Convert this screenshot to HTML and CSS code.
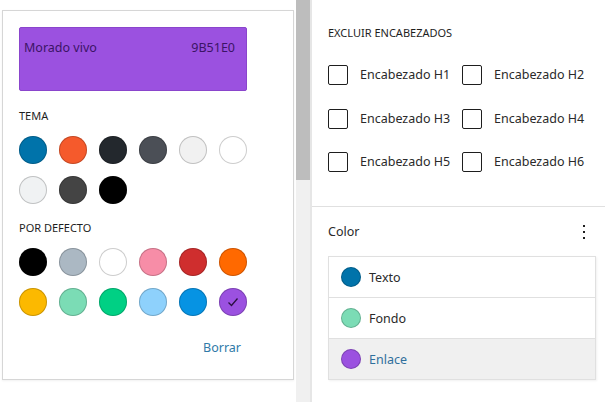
FILE: index.html
```html
<!DOCTYPE html>
<html lang="es">
<head>
<meta charset="utf-8">
<link rel="stylesheet" href="styles.css">
</head>
<body>
<div class="layout">
  <div class="left">
    <div class="popover">
      <div class="current">
        <span>Morado vivo</span>
        <span>9B51E0</span>
      </div>
      <div class="group-label">Tema</div>
      <div class="swatches">
        <span class="sw" style="background:#0073aa"></span>
        <span class="sw" style="background:#f55a2c"></span>
        <span class="sw" style="background:#23282d"></span>
        <span class="sw" style="background:#4b4f56"></span>
        <span class="sw" style="background:#f1f1f1"></span>
        <span class="sw" style="background:#ffffff"></span>
        <span class="sw" style="background:#f0f2f3"></span>
        <span class="sw" style="background:#444444"></span>
        <span class="sw" style="background:#000000"></span>
      </div>
      <div class="group-label second">Por defecto</div>
      <div class="swatches">
        <span class="sw" style="background:#000000"></span>
        <span class="sw" style="background:#abb8c3"></span>
        <span class="sw" style="background:#ffffff"></span>
        <span class="sw" style="background:#f78da7"></span>
        <span class="sw" style="background:#cf2e2e"></span>
        <span class="sw" style="background:#ff6900"></span>
        <span class="sw" style="background:#fcb900"></span>
        <span class="sw" style="background:#7bdcb5"></span>
        <span class="sw" style="background:#00d084"></span>
        <span class="sw" style="background:#8ed1fc"></span>
        <span class="sw" style="background:#0693e3"></span>
        <span class="sw selected" style="background:#9b51e0">
          <svg width="16" height="16" viewBox="0 0 16 16"><path d="M3.5 8.5 L6.5 11.5 L12.5 4.5" fill="none" stroke="#2a1040" stroke-width="1.3"/></svg>
        </span>
      </div>
      <div class="actions"><span class="clear">Borrar</span></div>
    </div>
  </div>
  <div class="scrollbar"><div class="thumb"></div></div>
  <div class="right">
    <section class="sect headings">
      <div class="sect-label">Excluir encabezados</div>
      <div class="checks">
        <label class="check"><span class="box"></span>Encabezado H1</label>
        <label class="check"><span class="box"></span>Encabezado H2</label>
        <label class="check"><span class="box"></span>Encabezado H3</label>
        <label class="check"><span class="box"></span>Encabezado H4</label>
        <label class="check"><span class="box"></span>Encabezado H5</label>
        <label class="check"><span class="box"></span>Encabezado H6</label>
      </div>
    </section>
    <section class="sect color">
      <div class="color-head">
        <span class="color-title">Color</span>
        <svg class="kebab" width="4" height="16" viewBox="0 0 4 16"><rect x="1" y="1" width="2" height="2" fill="#1e1e1e"/><rect x="1" y="7" width="2" height="2" fill="#1e1e1e"/><rect x="1" y="13" width="2" height="2" fill="#1e1e1e"/></svg>
      </div>
      <div class="color-list">
        <div class="item"><span class="dot" style="background:#0073aa"></span>Texto</div>
        <div class="item"><span class="dot" style="background:#7bdcb5"></span>Fondo</div>
        <div class="item active"><span class="dot" style="background:#9b51e0"></span>Enlace</div>
      </div>
    </section>
  </div>
</div>
</body>
</html>
```
FILE: styles.css
```css
* { box-sizing: border-box; }
html, body { margin: 0; padding: 0; background: #fff; }
body {
  font-family: "Noto Sans", "Open Sans", sans-serif;
  font-size: 12.5px;
  color: #2a2a2a;
  width: 605px;
  height: 402px;
  overflow: hidden;
}
.layout { display: flex; height: 402px; }
.left { width: 296px; flex: none; }
.popover {
  margin: 10px 0 0 2px;
  width: 292px;
  height: 370px;
  border: 1px solid #d6d6d6;
  box-shadow: 0 1px 2px rgba(0,0,0,0.06);
  padding: 16px 0 0 16px;
  display: flex;
  flex-direction: column;
}
.current {
  width: 228px;
  height: 64px;
  background: #9b51e0;
  border: 1px solid #8a45cc;
  border-radius: 2px;
  display: flex;
  justify-content: space-between;
  padding: 12px 11px 0 4px;
  color: #3b1466;
  line-height: 16px;
}
.group-label {
  margin-top: 17px;
  font-size: 11px;
  line-height: 16px;
  text-transform: uppercase;
  color: #1e1e1e;
}
.group-label.second { margin-top: 16px; }
.swatches {
  margin-top: 12px;
  width: 228px;
  display: grid;
  grid-template-columns: repeat(6, 28px);
  gap: 12px;
}
.sw {
  width: 28px;
  height: 28px;
  border-radius: 50%;
  box-shadow: inset 0 0 0 1px rgba(0,0,0,0.2);
  display: flex;
  align-items: center;
  justify-content: center;
}
.actions {
  width: 228px;
  margin-top: 24px;
  display: flex;
  justify-content: flex-end;
  padding-right: 6px;
}
.clear { color: #2f7aa8; line-height: 16px; }
.scrollbar {
  width: 16px;
  flex: none;
  background: #f0f0f0;
  border-right: 2px solid #e6e6e6;
}
.thumb { width: 14px; height: 180px; background: #bdbdbd; }
.right { flex: 1; display: flex; flex-direction: column; }
.sect { padding-left: 16px; }
.headings {
  height: 207px;
  border-bottom: 1px solid #e0e0e0;
  padding-top: 25px;
}
.sect-label {
  font-size: 11px;
  line-height: 16px;
  text-transform: uppercase;
  color: #1e1e1e;
}
.checks {
  margin-top: 24px;
  display: grid;
  grid-template-columns: 134px 134px;
  row-gap: 23.5px;
}
.check { display: flex; align-items: center; gap: 12px; line-height: 20px; }
.box {
  width: 20px;
  height: 20px;
  border: 1px solid #1e1e1e;
  border-radius: 2px;
  flex: none;
}
.color { padding-top: 16px; padding-right: 9px; }
.color-head {
  display: flex;
  justify-content: space-between;
  align-items: center;
  height: 18px;
  padding-right: 10px;
}
.color-title { line-height: 18px; }
.color-list {
  margin-top: 15px;
  border: 1px solid #e0e0e0;
  box-shadow: 1px 1px 2px rgba(0,0,0,0.06);
}
.item {
  height: 41px;
  display: flex;
  align-items: center;
  gap: 8px;
  padding-left: 12px;
  border-top: 1px solid #e0e0e0;
}
.item:first-child { border-top: none; height: 40px; }
.item.active { background: #f0f0f0; color: #2f6f9c; }
.dot {
  width: 20px;
  height: 20px;
  border-radius: 50%;
  box-shadow: inset 0 0 0 1px rgba(0,0,0,0.2);
}
```
